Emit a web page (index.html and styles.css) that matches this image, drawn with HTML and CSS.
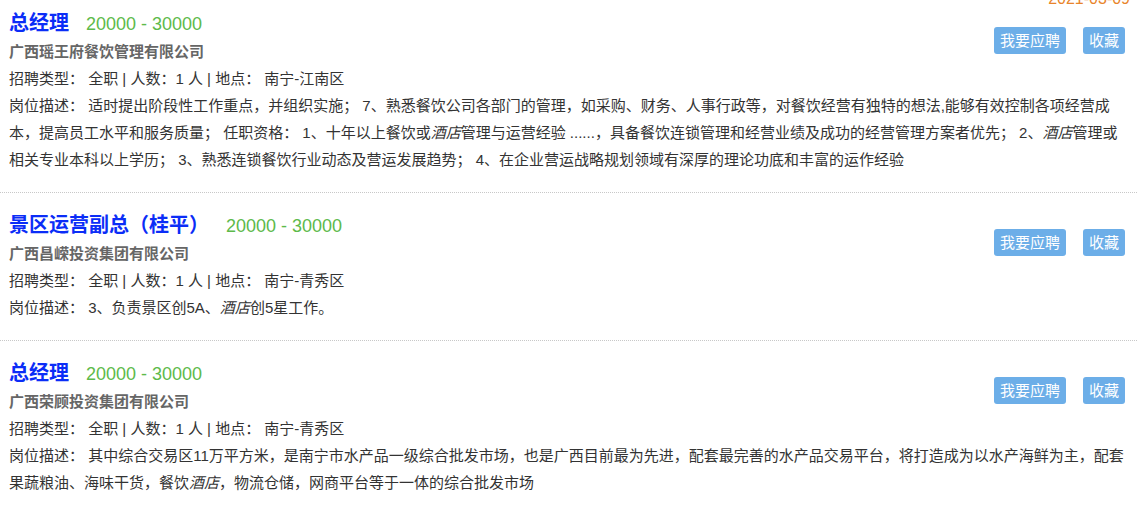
FILE: index.html
```html
<!DOCTYPE html>
<html lang="zh-CN">
<head>
<meta charset="utf-8">
<title>职位列表</title>
<link rel="stylesheet" href="styles.css">
</head>
<body>
<div class="list">
  <div class="item">
    <span class="date">2021-03-09</span>
    <div class="head">
      <div class="info">
        <h3 class="title"><span class="name">总经理</span><span class="salary">20000 - 30000</span></h3>
        <div class="company">广西瑶王府餐饮管理有限公司</div>
        <div class="meta">招聘类型： 全职 | 人数：1 人 | 地点： 南宁-江南区</div>
      </div>
      <div class="actions">
        <button class="btn">我要应聘</button>
        <button class="btn">收藏</button>
      </div>
    </div>
    <p class="desc">岗位描述： 适时提出阶段性工作重点，并组织实施； 7、熟悉餐饮公司各部门的管理，如采购、财务、人事行政等，对餐饮经营有独特的想法,能够有效控制各项经营成本，提高员工水平和服务质量； 任职资格： 1、十年以上餐饮或<em>酒店</em>管理与运营经验 ......，具备餐饮连锁管理和经营业绩及成功的经营管理方案者优先； 2、<em>酒店</em>管理或相关专业本科以上学历； 3、熟悉连锁餐饮行业动态及营运发展趋势； 4、在企业营运战略规划领域有深厚的理论功底和丰富的运作经验</p>
  </div>
  <div class="item">
    <div class="head">
      <div class="info">
        <h3 class="title"><span class="name">景区运营副总（桂平）</span><span class="salary">20000 - 30000</span></h3>
        <div class="company">广西昌嵘投资集团有限公司</div>
        <div class="meta">招聘类型： 全职 | 人数：1 人 | 地点： 南宁-青秀区</div>
      </div>
      <div class="actions">
        <button class="btn">我要应聘</button>
        <button class="btn">收藏</button>
      </div>
    </div>
    <p class="desc">岗位描述： 3、负责景区创5A、<em>酒店</em>创5星工作。</p>
  </div>
  <div class="item">
    <div class="head">
      <div class="info">
        <h3 class="title"><span class="name">总经理</span><span class="salary">20000 - 30000</span></h3>
        <div class="company">广西荣顾投资集团有限公司</div>
        <div class="meta">招聘类型： 全职 | 人数：1 人 | 地点： 南宁-青秀区</div>
      </div>
      <div class="actions">
        <button class="btn">我要应聘</button>
        <button class="btn">收藏</button>
      </div>
    </div>
    <p class="desc">岗位描述： 其中综合交易区11万平方米，是南宁市水产品一级综合批发市场，也是广西目前最为先进，配套最完善的水产品交易平台，将打造成为以水产海鲜为主，配套果蔬粮油、海味干货，餐饮<em>酒店</em>，物流仓储，网商平台等于一体的综合批发市场</p>
  </div>
</div>
</body>
</html>
```

FILE: styles.css
```css
html, body {
  margin: 0;
  padding: 0;
  background: #fff;
  overflow: hidden;
}

body {
  font-family: "Liberation Sans", "Noto Sans CJK SC", sans-serif;
  font-size: 15px;
  color: #333;
}

.list {
  margin-top: -9px;
}

.item {
  position: relative;
  padding: 17px 10px 19px 9px;
  border-bottom: 1px dotted #c8c8c8;
}

.date {
  position: absolute;
  top: -2px;
  right: 7px;
  font-size: 16px;
  line-height: 20px;
  color: #e8842a;
}

.head {
  display: flex;
  justify-content: space-between;
  align-items: flex-start;
}

.title {
  margin: 0;
  line-height: 30px;
  font-weight: normal;
}

.name {
  font-size: 20px;
  font-weight: bold;
  color: #0b2df7;
}

.salary {
  margin-left: 17px;
  font-size: 18px;
  color: #5dba4a;
}

.company {
  font-size: 15px;
  font-weight: bold;
  line-height: 26px;
  color: #666;
}

.meta {
  line-height: 27px;
}

.actions {
  display: flex;
  gap: 17px;
  margin-top: 19px;
  margin-right: 2px;
}

.btn {
  height: 27px;
  padding: 0 6px;
  border: none;
  border-radius: 3px;
  background: #6caee8;
  color: #fff;
  font-family: "Liberation Sans", "Noto Sans CJK SC", sans-serif;
  font-size: 15px;
  line-height: 27px;
  cursor: pointer;
}

.desc {
  margin: 0;
  line-height: 27px;
}

.desc em {
  font-style: italic;
}
```
